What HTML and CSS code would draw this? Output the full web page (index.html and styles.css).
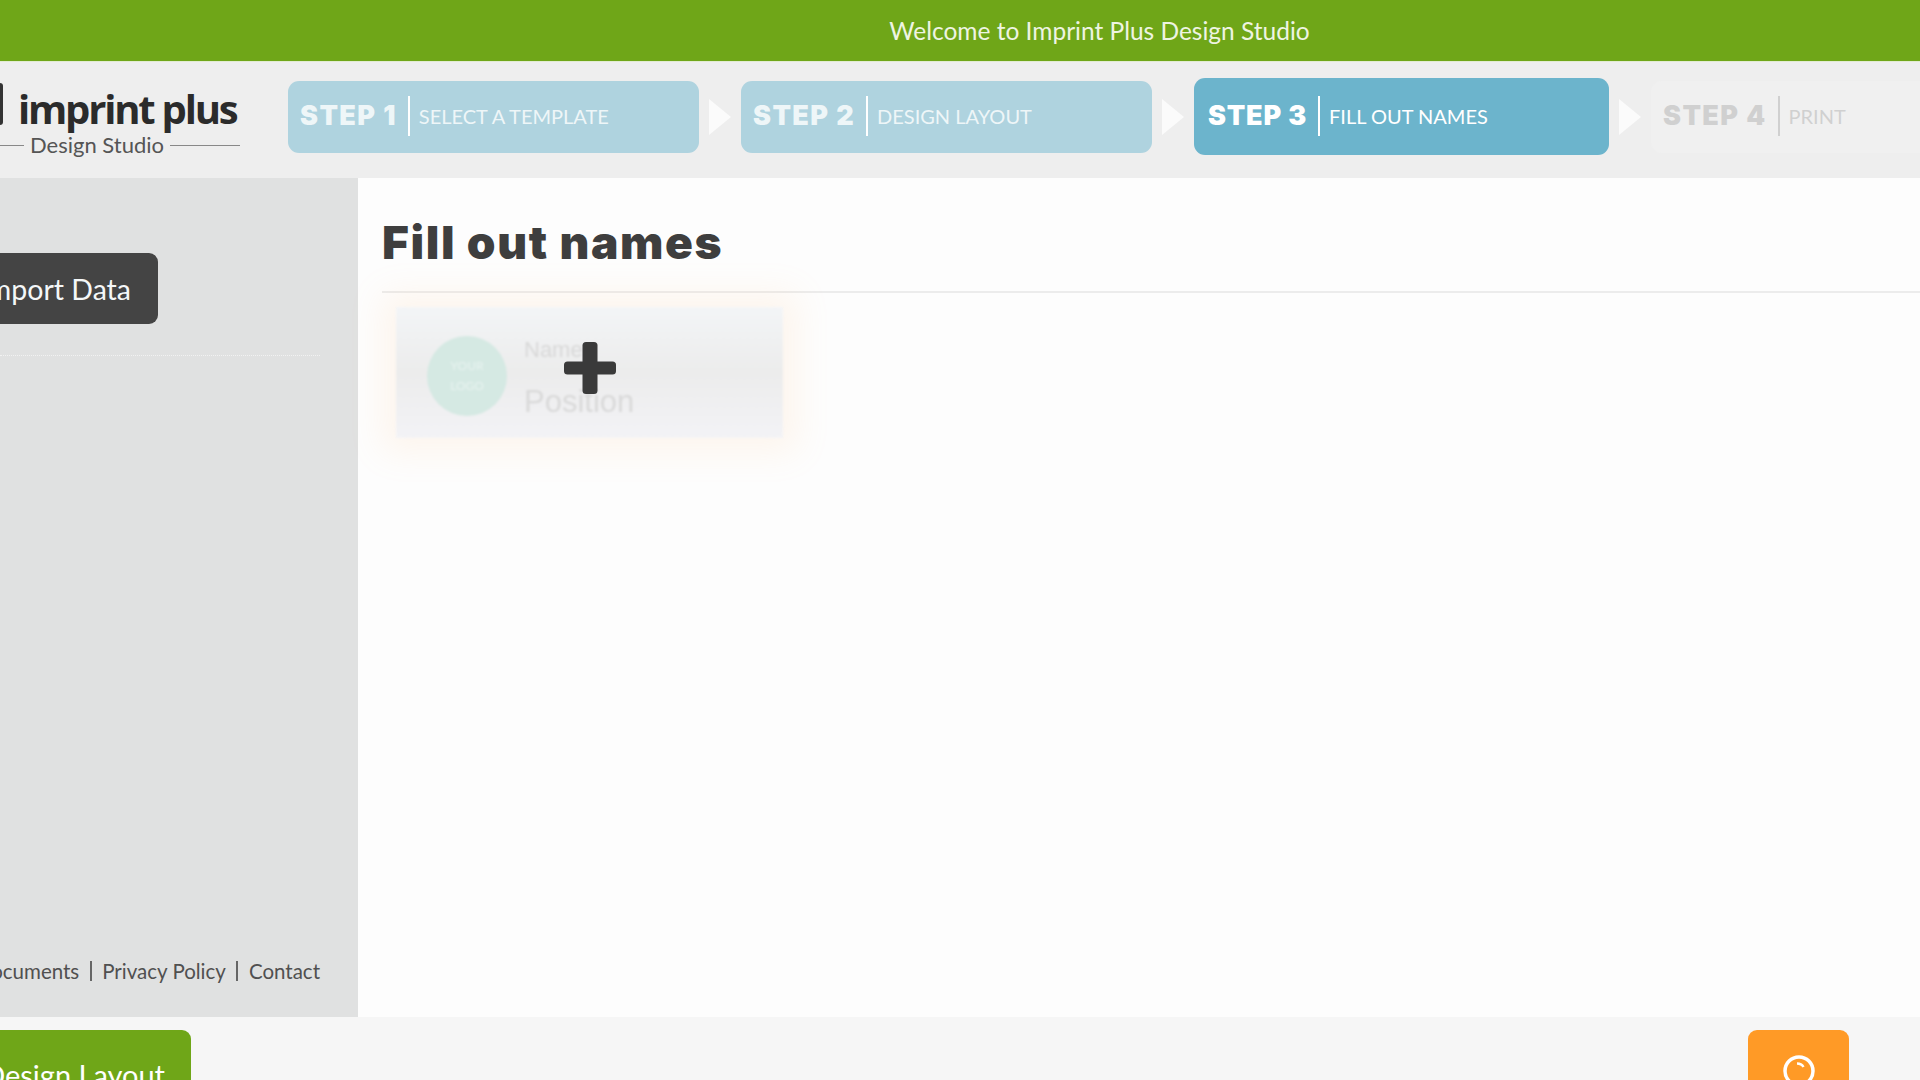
FILE: index.html
```html
<!DOCTYPE html>
<html>
<head>
<meta charset="utf-8" />
<title>Imprint Plus Design Studio</title>
<link rel="stylesheet" href="styles.css">
</head>
<body>
	<div id="wrap">
		<div id="welcome">Welcome to Imprint Plus Design Studio</div>

		<div id="head">
			<div class="logo">
				<div class="logoMark"></div>
				<p class="logoName">imprint plus</p>
				<p class="logoSub"><span>Design Studio</span></p>
			</div>
			<ul id="steps">
				<li class="step done"><b>STEP 1</b><span>SELECT A TEMPLATE</span></li>
				<li class="arrow"></li>
				<li class="step done"><b>STEP 2</b><span>DESIGN LAYOUT</span></li>
				<li class="arrow"></li>
				<li class="step active"><b>STEP 3</b><span>FILL OUT NAMES</span></li>
				<li class="arrow"></li>
				<li class="step next"><b>STEP 4</b><span>PRINT</span></li>
			</ul>
		</div>

		<div id="middle">
			<div id="side">
				<div class="sideTop">
					<a class="importBtn" href="javascript:;">Import Data</a>
				</div>
				<p class="links">
					<a href="javascript:;">Documents</a><i></i><a href="javascript:;">Privacy Policy</a><i></i><a href="javascript:;">Contact</a>
				</p>
			</div>
			<div id="main">
				<h1>Fill out names</h1>
				<div class="cardWrap">
					<div class="card">
						<div class="cardLogo">YOUR<br />LOGO</div>
						<div class="cardText">
							<p class="cardName">Name</p>
							<p class="cardPos">Position</p>
						</div>
					</div>
					<svg class="plus" width="52" height="52" viewBox="0 0 52 52">
						<rect x="18.5" y="0" width="15" height="52" rx="3.5" fill="#3a3a3a" />
						<rect x="0" y="19.5" width="52" height="13" rx="3.5" fill="#3a3a3a" />
					</svg>
				</div>
			</div>
		</div>

		<div id="foot">
			<a class="nextBtn" href="javascript:;">Design Layout</a>
			<a class="helpBtn" href="javascript:;">
				<svg width="44" height="44" viewBox="0 0 44 44">
					<circle cx="22" cy="22" r="14" stroke="#fff" stroke-width="3.5" fill="none" />
					<path d="M20 14.500q4.500 0 6.500 3.500" stroke="#fff" stroke-width="2.500" fill="none" />
				</svg>
			</a>
		</div>
	</div>
</body>
</html>
```

FILE: styles.css
```css
html, body, div, p, ul, h1{margin:0; padding:0;}
li{list-style:none;}
a{text-decoration:none;}
body{font-family:"Lato","Liberation Sans",sans-serif; background:#fdfdfd; overflow:hidden;}

#wrap{width:1920px; height:1080px; display:flex; flex-direction:column; overflow:hidden;}

#welcome{height:61px; line-height:62px; padding-left:279px; text-align:center; font-size:24.5px; color:#eef4e2; background:#6fa618; flex:none;}

#head{height:117px; flex:none; display:flex; align-items:center; padding-bottom:7px; background:#eeeeee; border-top:1px solid #e2ecd2; box-sizing:border-box;}

.logo{width:288px; height:72px; flex:none; position:relative; color:#2b2b2b; margin-top:7px;}
.logoMark{position:absolute; left:-6px; top:-1px; width:9px; height:42px; background:#333; border-radius:3px;}
.logoName{padding-left:18px; font:700 40px/42px "Open Sans",sans-serif; letter-spacing:-2.200px; white-space:nowrap; margin-top:4px;}
.logoSub{width:240px; margin-top:2px; font-size:22px; line-height:26px; color:#555;}
.logoSub span{display:flex; align-items:center; gap:6px;}
.logoSub span:before{content:""; width:24px; height:1px; background:#888;}
.logoSub span:after{content:""; flex:1; height:1px; background:#888;}

#steps{display:flex; align-items:center; flex:none;}
.step{width:411px; height:72px; box-sizing:border-box; padding-left:12px; display:flex; align-items:center; border-radius:11px; color:#fff; flex:none;}
.step b{font-family:"Inter",sans-serif; font-size:27px; font-weight:900; line-height:40px; margin-top:-2px; padding-right:11px; border-right:2px solid #fff; white-space:nowrap; letter-spacing:1.400px;}
.step span{font-size:20px; padding-left:9px; white-space:nowrap; margin-top:-2px;}
.done{background:#afd3df; color:#eef6f8;}
.active{width:415px; height:77px; padding-left:14px; background:#6cb4cc;}
.active b{letter-spacing:.8px;}
.next{background:#f0f0f0; color:#d0d0d0;}
.next b{border-right-color:#d0d0d0;}
.arrow{width:42px; height:38px; flex:none; display:flex; justify-content:center; align-items:center;}
.arrow:before{content:""; border-left:22px solid #fbfbfb; border-top:18px solid transparent; border-bottom:18px solid transparent;}

#middle{flex:1; display:flex; min-height:0;}

#side{width:358px; flex:none; background:#e0e1e1; display:flex; flex-direction:column; justify-content:space-between;}
.sideTop{height:178px; margin-right:38px; padding-top:75px; box-sizing:border-box; border-bottom:1px dotted #f2f2f2;}
.importBtn{display:flex; align-items:center; justify-content:flex-end; width:158px; height:71px; padding-right:27px; box-sizing:border-box; background:#444444; color:#f4f7f8; font-size:28.500px; white-space:nowrap; border-radius:0 9px 9px 0;}
.links{display:flex; align-items:center; justify-content:flex-end; padding-right:38px; margin-bottom:32px; font-size:20.500px; line-height:28px; white-space:nowrap;}
.links a{color:#505050; flex:none;}
.links i{width:2px; height:20px; margin:0 10.500px; background:#666; flex:none;}

#main{flex:1; padding-left:24px;}
#main h1{height:115px; line-height:128px; box-sizing:border-box; font-family:"Inter",sans-serif; font-size:46px; font-weight:900; letter-spacing:1.600px; color:#3e3e3e; border-bottom:2px solid #ececec;}

.cardWrap{width:387px; height:131px; margin:14px 0 0 14px; position:relative;}
.card{height:100%; display:flex; align-items:center; padding-left:31px; box-sizing:border-box; background:linear-gradient(#f3f5f7, #ececec 50%, #f3f3f6); box-shadow:0 0 32px 14px rgba(255,190,120,.12); filter:blur(.8px);}
.cardLogo{width:80px; height:80px; margin-top:6px; border-radius:50%; background:#d5e9e3; color:#e8f3f0; font-size:12px; line-height:20px; text-align:center; display:flex; align-items:center; justify-content:center; flex:none;}
.cardText{margin:12px 0 0 17px; font-family:"Liberation Sans",sans-serif;}
.cardName{font-size:22px; line-height:30px; color:#d8d8d8;}
.cardPos{font-size:31px; line-height:42px; margin-top:16px; color:#d9d9d9;}
.plus{position:absolute; left:168px; top:35px;}

#foot{height:63px; flex:none; display:flex; align-items:flex-start; justify-content:space-between; padding:13px 71px 0 0; background:#f6f6f6; box-sizing:border-box;}
.nextBtn{display:block; width:191px; height:70px; padding-right:26px; box-sizing:border-box; text-align:right; line-height:90px; background:#6fa618; color:#fff; font-size:29px; white-space:nowrap; border-radius:0 9px 9px 0; overflow:hidden; direction:rtl;}
.helpBtn{display:flex; justify-content:center; width:101px; height:70px; padding-top:19px; box-sizing:border-box; background:#ff9a26; border-radius:9px;}
```
